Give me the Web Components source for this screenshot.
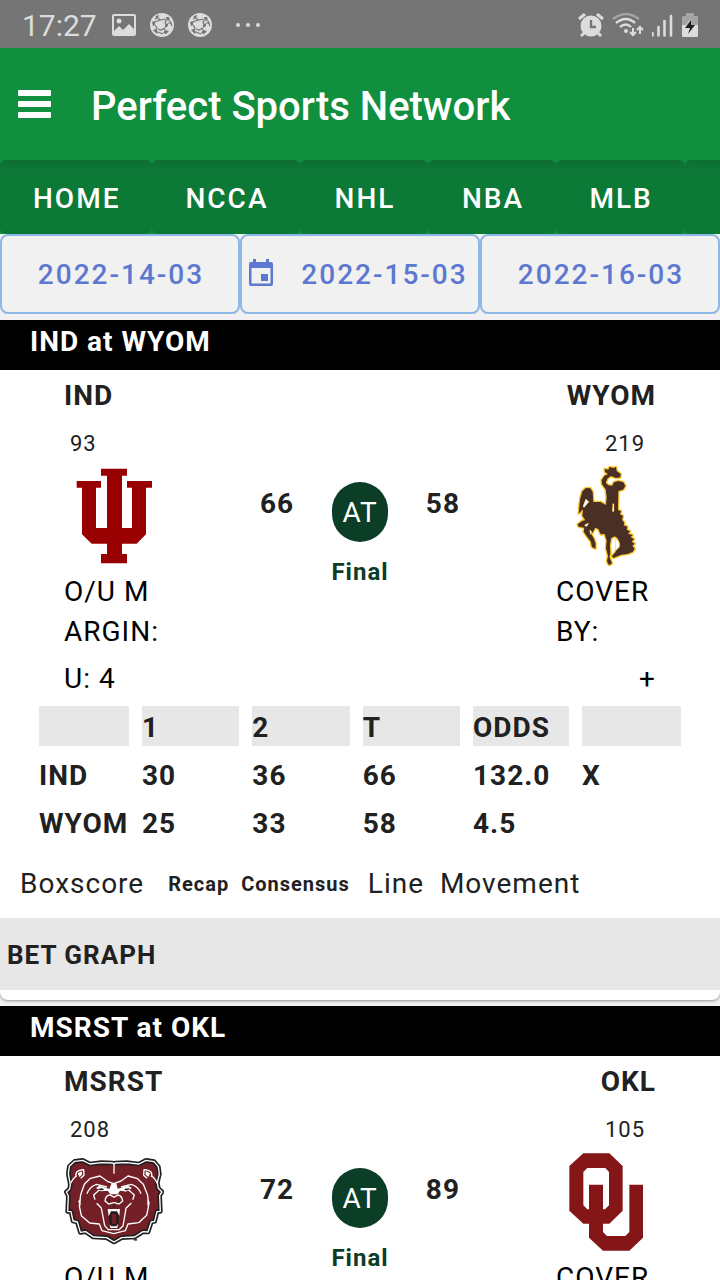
<!DOCTYPE html>
<html lang="en">
<head>
<meta charset="utf-8">
<meta name="viewport" content="width=device-width, initial-scale=1">
<title>Perfect Sports Network</title>
<style>
  html, body { margin: 0; }
  body { font-family: Roboto, "Liberation Sans", sans-serif; font-size: 28px; color: #212121; background: #f1f1f1; }
</style>
</head>
<body>
<psn-app>
  <psn-status-bar slot="top"></psn-status-bar>
  <psn-app-bar slot="top">Perfect Sports Network</psn-app-bar>
  <psn-tabs slot="top"></psn-tabs>
  <psn-dates slot="top"></psn-dates>

  <psn-game away="IND" home="WYOM" away-id="93" home-id="219" away-score="66" home-score="58"
            margin="U: 4" cover="+" away-line="30,36,66,132.0,X" home-line="25,33,58,4.5,">
    <svg slot="away-logo" width="100" height="100" viewBox="72 288 300 300" role="img" aria-label="IND logo">
      <path fill="#980001" d="M183 296H261V317H246V474H276V353H261V333H336V353H318V493L290 521H246V552H261V580H183V552H201V521H155L126 493V353H110V333H183V353H168V474H201V317H183Z"/>
    </svg>
    <svg slot="home-logo" width="100" height="100" viewBox="48 288 300 300" role="img" aria-label="WYOM logo">
      <g fill="#492f24" stroke="#fdc82f" stroke-width="8" stroke-linejoin="round" paint-order="stroke">
        <path d="M194 297L205 299 209 291 221 294 228 291 230 303 242 312 241 322 228 324 213 318 203 325 197 338 205 346 217 347 222 337 235 333 250 337 256 348 249 359 235 363 234 420 243 423 240 433 249 438 246 449 253 458 251 466 262 470 260 479 270 484 264 491 278 495 272 502 282 507 275 515 284 521 277 527 284 536 278 546 262 552 244 554 220 564 216 558 225 548 230 540 239 532 240 520 233 505 224 499 213 505 210 525 211 552 208 560 216 580 207 586 201 574 204 558 198 535 200 512 194 492 182 493 175 477 166 473 160 484 154 493 162 506 167 521 166 536 156 531 152 514 142 501 131 485 133 473 116 470 113 463 128 452 136 451 127 437 129 418 116 431 118 409 121 385 127 364 138 354 151 355 158 366 160 396 181 396 198 405 200 380 197 358 186 343 185 330 193 318 204 312 195 306Z"/>
        <path fill="#fff" stroke-width="3" d="M130 408L138 388 146 396 141 401 132 412ZM219 401L221 402 221 424 218 424ZM134 466L145 460 140 469ZM150 480L155 487 152 493ZM226 508L235 514 237 529 228 540Z"/>
      </g>
    </svg>
  </psn-game>

  <psn-game away="MSRST" home="OKL" away-id="208" home-id="105" away-score="72" home-score="89"
            margin="O: 8" cover="+" away-line="34,38,72,151.0," home-line="41,48,89,9.5,X">
    <svg slot="away-logo" width="100" height="100" viewBox="72 36 300 300" role="img" aria-label="MSRST logo">
      <path fill="#731f27" stroke="#211f20" stroke-width="14" stroke-linejoin="round" d="M91 133L85 102 88 79 104 64 128 61 150 72 184 68 218 69 222 72 226 69 260 68 297 72 318 61 342 65 355 80 358 102 352 128 355 145 366 156 359 166 361 214 351 215 344 244 334 246 324 276 309 275 284 291 245 293 222 306 200 293 160 291 137 275 121 277 112 246 99 243 93 215 83 214 85 168 79 156 89 147Z"/>
      <path fill="none" stroke="#fff" stroke-width="4" stroke-linejoin="round" d="M91 133L85 102 88 79 104 64 128 61 150 72 184 68 218 69 222 72 226 69 260 68 297 72 318 61 342 65 355 80 358 102 352 128 355 145 366 156 359 166 361 214 351 215 344 244 334 246 324 276 309 275 284 291 245 293 222 306 200 293 160 291 137 275 121 277 112 246 99 243 93 215 83 214 85 168 79 156 89 147Z"/>
      <g fill="none" stroke="#fff" stroke-width="4" stroke-linejoin="round">
        <path d="M222 70V101M109 111Q102 91 131 89L132 106 122 115M334 111Q341 91 312 89L311 106 321 115M108 108Q96 119 92 130M336 108Q348 119 352 130"/>
        <path d="M118 198L122 164 133 133 151 115 180 108 202 124 221 131 243 123 264 108 291 115 310 133 323 166 326 196 M118 198L124 227 149 249 178 252 186 272 221 281 256 272 264 252 296 248 320 226 326 196"/>
        <path d="M165 179L161 165 177 151 203 151M278 179L283 165 267 151 241 151M170 190L184 204 194 257 205 269 237 269 249 258 258 205 274 189M141 161Q149 139 170 133L201 141M303 161Q295 139 274 133L243 141"/>
      </g>
      <path fill="#fff" d="M215 130L229 130 233 146 264 137 276 144 257 155 241 151 233 163 211 163 203 152 184 154 168 144 178 137 208 147ZM113 100L126 94 126 104 118 111ZM330 100L317 94 317 104 325 111ZM114 184L121 178 122 199ZM323 178L330 188 322 199Z"/>
      <g fill="#211f20"><path d="M174 146L188 145 192 150 180 151ZM255 146L270 145 264 151 253 151Z"/><path d="M206 212L237 212 235 252 227 261 215 261 208 250Z"/></g>
      <path fill="#731f27" d="M215 222L229 222 228 252 216 252Z"/>
      <path fill="#731f27" stroke="#fff" stroke-width="4" d="M195 183Q197 164 211 165L222 172 234 165Q246 167 248 183L237 192 222 188 206 192Z"/>
      <path fill="#fff" d="M203 207L240 207 238 228 231 214 213 214 206 229ZM209 254L214 259 229 259 234 251 232 264 211 264Z"/>
      <path fill="none" stroke="#211f20" stroke-width="3" d="M207 178V188M236 178V188M222 191V204M276 296H283V302M286 302V295L290 299V302"/>
    </svg>
    <svg slot="home-logo" width="100" height="100" viewBox="48 36 300 300" role="img" aria-label="OKL logo">
      <path fill="#841618" fill-rule="evenodd" d="M130 40H208L248 78V212L208 251H130L88 212V78ZM142 84L130 96V196L142 208H195L207 196V96L196 84Z"/>
      <path fill="#841618" d="M147 134H189V276L201 288H256L268 276V134H309V293L268 332H189L147 293Z"/>
    </svg>
  </psn-game>
</psn-app>

<template id="app-template">
  <style>
    :host { display: flex; flex-direction: column; height: 100vh; overflow: hidden; }
    header { flex: none; }
    main { flex: 1; min-height: 0; overflow-y: auto; scrollbar-width: none; }
  </style>
  <header><slot name="top"></slot></header>
  <main><slot></slot></main>
</template>

<template id="status-template">
  <style>
    :host { display: flex; justify-content: space-between; align-items: center; box-sizing: border-box;
            height: 48px; padding: 2px 22px 0; background: #757575; color: #dcdcdc; font-size: 30px; }
    div { display: flex; align-items: center; gap: 14px; }
    .right { gap: 8px; }
    svg { display: block; }
    span { min-width: 76px; }
    .dots { margin-left: 8px; }
  </style>
  <div>
    <span>17:27</span>
    <svg width="24" height="24" viewBox="0 0 24 24"><path fill="#dcdcdc" fill-rule="evenodd" d="M2 1H22Q24 1 24 3V21Q24 23 22 23H2Q0 23 0 21V3Q0 1 2 1ZM2 3V18L7 13 11 17 17 11 22 16V3Z"/><circle cx="7" cy="8" r="2.5" fill="#dcdcdc"/></svg>
    <svg width="24" height="24" viewBox="0 0 24 24"><circle cx="12" cy="12" r="12" fill="#dcdcdc"/><path fill="#757575" d="M6 3L9 2 8 5 5 7ZM16 4L19 4 20 8 17 7ZM15 12L18 10 18 13 15 15ZM2 9L5 8 5 12 3 13ZM3 17L6 16 8 19 7 21ZM15 17L19 18 16 21 13 20Z"/><path d="M8 5L10 7 16 6M10 7L5 9M17 7L15 9 16 12M18 10L22 10M5 12L7 15 6 17M15 15L11 17 8 16M15 17L14 15M8 19L13 21M20 8L22 13" stroke="#757575" stroke-width="1.2" fill="none"/></svg>
    <svg width="24" height="24" viewBox="0 0 24 24"><circle cx="12" cy="12" r="12" fill="#dcdcdc"/><path fill="#757575" d="M6 3L9 2 8 5 5 7ZM16 4L19 4 20 8 17 7ZM15 12L18 10 18 13 15 15ZM2 9L5 8 5 12 3 13ZM3 17L6 16 8 19 7 21ZM15 17L19 18 16 21 13 20Z"/><path d="M8 5L10 7 16 6M10 7L5 9M17 7L15 9 16 12M18 10L22 10M5 12L7 15 6 17M15 15L11 17 8 16M15 17L14 15M8 19L13 21M20 8L22 13" stroke="#757575" stroke-width="1.2" fill="none"/></svg>
    <svg class="dots" width="28" height="24" viewBox="0 0 28 24" fill="#dcdcdc"><circle cx="4" cy="12" r="2"/><circle cx="14" cy="12" r="2"/><circle cx="24" cy="12" r="2"/></svg>
  </div>
  <div class="right">
    <svg width="26" height="24" viewBox="0 0 26 24"><g fill="none" stroke="#dcdcdc" stroke-width="3"><path d="M1 6L7 1M25 6L19 1"/><path d="M7 19L3 23M19 19L23 23"/></g><circle cx="13" cy="13" r="10.5" fill="#dcdcdc"/><path d="M13 7V14H18" fill="none" stroke="#757575" stroke-width="2.4"/></svg>
    <svg width="32" height="24" viewBox="0 0 32 24"><g fill="none" stroke="#dcdcdc" stroke-width="2.4"><path stroke="#a4a4a4" d="M1 6Q14 -4 27 6"/><path d="M4 10Q14 2 23 10M8 14Q14 9 19 14"/><path stroke-width="2" d="M21 15V22M18 19L21 22 24 19M28 21V14M25 17L28 14 31 17"/></g><circle cx="14" cy="18" r="2" fill="#dcdcdc"/></svg>
    <svg width="22" height="24" viewBox="1 0 22 24"><path d="M1.500 20V22.500M7.500 14V22.500M13.500 8V22.500M20 3V22.500" stroke="#dcdcdc" stroke-width="2.600" stroke-linecap="round"/></svg>
    <svg width="16" height="24" viewBox="0 0 16 24"><path fill="#a4a4a4" d="M4 0H12V3H15Q16 3 16 4V12H0V4Q0 3 1 3H4Z"/><path fill="#dcdcdc" d="M0 12H16V23Q16 24 15 24H1Q0 24 0 23ZM9 6L4 12H9Z"/><path fill="#212121" d="M9 7L3 15H8L6 21 13 12H9Z"/></svg>
  </div>
</template>

<template id="appbar-template">
  <style>
    :host { display: flex; align-items: center; gap: 40px; box-sizing: border-box; height: 112px; padding: 4px 18px 0; background: #108f3f; color: #fff; }
    button { all: unset; display: block; width: 33px; height: 32px; cursor: pointer; }
    svg { display: block; }
    h1 { margin: 0; padding-top: 2px; font-size: 40px; font-weight: 500; line-height: 48px; }
  </style>
  <button aria-label="Menu"><svg width="33" height="32" viewBox="0 0 33 32" fill="#fff"><rect y="0" width="33" height="6" rx="1"/><rect y="11" width="33" height="6" rx="1"/><rect y="22" width="33" height="6" rx="1"/></svg></button>
  <h1><slot></slot></h1>
</template>

<template id="tabs-template">
  <style>
    :host { display: block; background: #108a3e; overflow: hidden; }
    nav { display: flex; }
    a { flex: none; box-sizing: border-box; min-width: 128px; height: 74px; padding: 2px 32px 0 33px; line-height: 74px; border-radius: 6px;
        background: linear-gradient(#0d6d33, #0d7937 12px); color: #fff; font-weight: 500; letter-spacing: 2px; text-align: center; text-decoration: none; }
  </style>
  <nav><a href="#home">HOME</a><a href="#ncca">NCCA</a><a href="#nhl">NHL</a><a href="#nba">NBA</a><a href="#mlb">MLB</a><a href="#more" aria-label="More"></a></nav>
</template>

<template id="dates-template">
  <style>
    :host { display: grid; grid-template-columns: repeat(3, 1fr); padding-bottom: 6px; background: #f1f1f1; }
    button { display: flex; align-items: center; justify-content: center; box-sizing: border-box; height: 80px; margin: 0; padding: 0 4px 0 6px;
             border: 2px solid #8cb8e6; border-radius: 8px; background: #f1f1f1; color: #5c78d0;
             font: 500 28px Roboto, "Liberation Sans", sans-serif; letter-spacing: 2px; white-space: nowrap; }
    .today { gap: 27px; padding: 0 8px 0 4px; }
    svg { flex: none; }
  </style>
  <button>2022-14-03</button>
  <button class="today"><svg width="26" height="32" viewBox="0 0 26 32"><path fill="#5c78d0" fill-rule="evenodd" d="M5 1H8V4H18V1H21V4H23Q25 4 25 6V26Q25 28 23 28H3Q1 28 1 26V6Q1 4 3 4H5ZM3.500 10V25.500H22.500V10ZM13 16H20V23H13Z"/></svg>2022-15-03</button>
  <button>2022-16-03</button>
</template>

<template id="game-template">
  <style>
    :host { display: block; padding-bottom: 6px; line-height: 40px; letter-spacing: 1px; }
    h2 { margin: 0; padding: 0 30px 6px; background: #000; color: #fff; font-size: 28px; font-weight: 700; line-height: 44px; }
    article { background: #fff; border-radius: 0 0 8px 8px; box-shadow: 0 1px 3px #0006; padding-bottom: 10px; }
    .match { display: flex; justify-content: space-between; padding: 6px 64px 0; }
    .team { width: 100px; color: #000; }
    .name { font-weight: 700; color: #212121; }
    .id { margin: 13px 0 7px; padding: 0 11px 0 6px; font-size: 22px; line-height: 30px; color: #212121; }
    .label { margin-top: 6px; }
    .margin { word-break: break-all; }
    .value { margin-top: 8px; line-height: 38px; }
    .home .name, .home .id, .home .value { text-align: right; }
    ::slotted(svg) { display: block; }
    .middle { display: grid; grid-template-columns: 1fr 56px 1fr; width: 200px; align-content: start; margin-top: 106px; }
    .score { font-weight: 700; line-height: 44px; }
    .score.last { text-align: right; }
    .at { height: 60px; border-radius: 28px; background: #0b3d27; color: #fff; line-height: 62px; text-align: center; }
    .final { grid-column: 1 / -1; margin-top: 10px; text-align: center; font-size: 24px; font-weight: 700; color: #0b3d27; }
    table { width: calc(100% - 52px); margin: 0 26px; table-layout: fixed; border-collapse: separate; border-spacing: 13px 8px; font-weight: 700; }
    th, td { box-sizing: border-box; padding: 4px 0 0; height: 40px; line-height: 36px; text-align: left; white-space: nowrap; }
    thead th, thead td { background: #e7e7e7; }
    .first { width: 90px; }
    .odds { width: 96px; }
    .cover { width: 99px; }
    nav { display: flex; align-items: center; height: 68px; padding-left: 20px; }
    nav a { color: #212121; text-decoration: none; white-space: pre; }
    .small { font-size: 20px; font-weight: 700; }
    .recap { margin: 0 12px 0 24px; }
    .line { margin-left: 18px; }
    .graph { display: block; box-sizing: border-box; width: 100%; height: 72px; margin: 0; padding: 2px 7px 0; border: 0; background: #e7e7e7; color: #212121;
             font: 700 26px Roboto, "Liberation Sans", sans-serif; letter-spacing: 1px; text-align: left; }
  </style>
  <h2><span data-f="away"></span> at <span data-f="home"></span></h2>
  <article>
    <div class="match">
      <div class="team">
        <div class="name" data-f="away"></div>
        <div class="id" data-f="away-id"></div>
        <slot name="away-logo"></slot>
        <div class="label margin">O/U MARGIN:</div>
        <div class="value" data-f="margin"></div>
      </div>
      <div class="middle">
        <div class="score" data-f="away-score"></div>
        <div class="at">AT</div>
        <div class="score last" data-f="home-score"></div>
        <div class="final">Final</div>
      </div>
      <div class="team home">
        <div class="name" data-f="home"></div>
        <div class="id" data-f="home-id"></div>
        <slot name="home-logo"></slot>
        <div class="label">COVER BY:</div>
        <div class="value" data-f="cover"></div>
      </div>
    </div>
    <table>
      <thead><tr><td class="first"></td><th scope="col">1</th><th scope="col">2</th><th scope="col">T</th><th class="odds" scope="col">ODDS</th><td class="cover"></td></tr></thead>
      <tbody>
        <tr data-line="away"><th scope="row" data-f="away"></th></tr>
        <tr data-line="home"><th scope="row" data-f="home"></th></tr>
      </tbody>
    </table>
    <nav><a href="#boxscore">Boxscore</a><a class="small recap" href="#recap">Recap</a><a class="small" href="#consensus">Consensus</a><a class="line" href="#line">Line  Movement</a></nav>
    <button class="graph">BET GRAPH</button>
  </article>
</template>

<script>
  class TemplateElement extends HTMLElement {
    constructor() {
      super();
      const template = document.getElementById(this.constructor.template);
      this.attachShadow({ mode: "open" }).append(template.content.cloneNode(true));
    }
  }

  class PsnApp extends TemplateElement { static template = "app-template"; }
  class PsnStatusBar extends TemplateElement { static template = "status-template"; }
  class PsnAppBar extends TemplateElement { static template = "appbar-template"; }
  class PsnTabs extends TemplateElement { static template = "tabs-template"; }
  class PsnDates extends TemplateElement { static template = "dates-template"; }

  class PsnGame extends TemplateElement {
    static template = "game-template";
    connectedCallback() {
      if (this.filled) return;
      this.filled = true;
      for (const node of this.shadowRoot.querySelectorAll("[data-f]")) {
        node.textContent = this.getAttribute(node.dataset.f);
      }
      for (const row of this.shadowRoot.querySelectorAll("[data-line]")) {
        for (const text of this.getAttribute(row.dataset.line + "-line").split(",")) {
          row.insertCell().textContent = text;
        }
      }
    }
  }

  customElements.define("psn-app", PsnApp);
  customElements.define("psn-status-bar", PsnStatusBar);
  customElements.define("psn-app-bar", PsnAppBar);
  customElements.define("psn-tabs", PsnTabs);
  customElements.define("psn-dates", PsnDates);
  customElements.define("psn-game", PsnGame);
</script>
</body>
</html>
